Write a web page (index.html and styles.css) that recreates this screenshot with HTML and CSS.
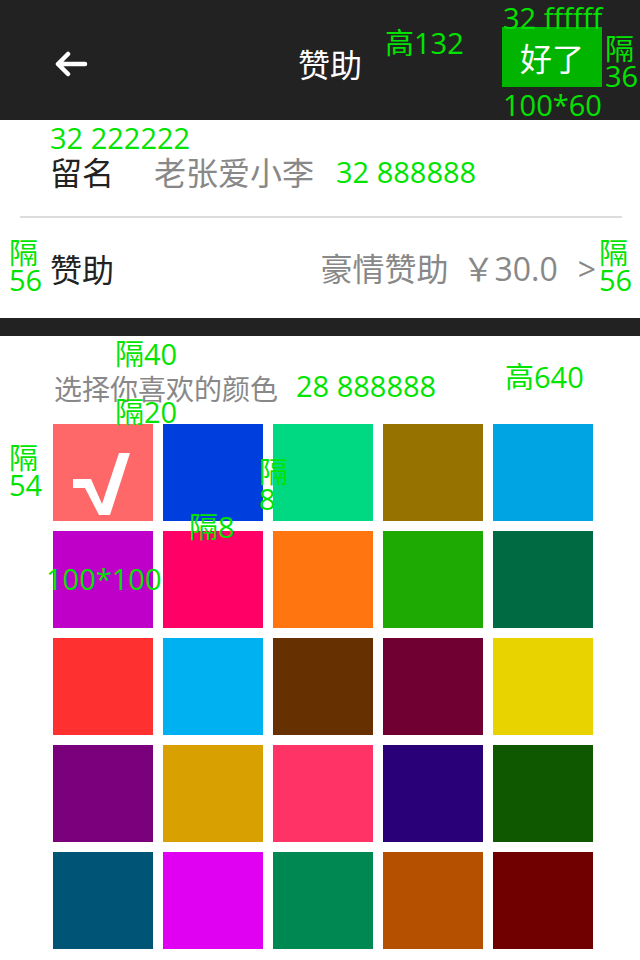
FILE: index.html
```html
<!DOCTYPE html>
<html lang="zh">
<head>
<meta charset="utf-8">
<title>赞助</title>
<link rel="stylesheet" href="styles.css">
</head>
<body>
<div class="page">
  <header class="topbar">
    <svg class="back" width="34" height="26" viewBox="0 0 34 26">
      <path d="M14 3 L4 13 L14 23 M4 13 H31" fill="none" stroke="#fff" stroke-width="4.5" stroke-linecap="round" stroke-linejoin="round"/>
    </svg>
    <div class="title">赞助</div>
    <button class="done">好了</button>
  </header>

  <div class="row row-name">
    <span class="label">留名</span>
    <span class="value">老张爱小李</span>
  </div>
  <div class="divider"></div>
  <div class="row row-amount">
    <span class="label">赞助</span>
    <span class="amount"><span>豪情赞助</span><span class="price">￥30.0</span><span class="chev">&gt;</span></span>
  </div>

  <div class="band"></div>

  <section class="colors">
    <div class="colors-title">选择你喜欢的颜色</div>
    <div class="grid">
      <div class="tile selected" style="background:#ff6868">
        <svg width="100" height="97" viewBox="0 0 100 97">
          <polygon points="20,55 38,55 49,80 66,29 77,29 57,91 46,91 32,64 20,64" fill="#fff"/>
        </svg>
      </div>
      <div class="tile" style="background:#003fdd"></div>
      <div class="tile" style="background:#00d882"></div>
      <div class="tile" style="background:#967200"></div>
      <div class="tile" style="background:#00a4e2"></div>

      <div class="tile" style="background:#bf00c8"></div>
      <div class="tile" style="background:#ff0066"></div>
      <div class="tile" style="background:#ff7610"></div>
      <div class="tile" style="background:#1eaa02"></div>
      <div class="tile" style="background:#006a42"></div>

      <div class="tile" style="background:#ff3030"></div>
      <div class="tile" style="background:#00b1f2"></div>
      <div class="tile" style="background:#663000"></div>
      <div class="tile" style="background:#700032"></div>
      <div class="tile" style="background:#e8d200"></div>

      <div class="tile" style="background:#7a007c"></div>
      <div class="tile" style="background:#d8a000"></div>
      <div class="tile" style="background:#ff3366"></div>
      <div class="tile" style="background:#2a0078"></div>
      <div class="tile" style="background:#105800"></div>

      <div class="tile" style="background:#005576"></div>
      <div class="tile" style="background:#e000f2"></div>
      <div class="tile" style="background:#008852"></div>
      <div class="tile" style="background:#b45000"></div>
      <div class="tile" style="background:#700000"></div>
    </div>
  </section>

  <div class="note n1">32 ffffff</div>
  <div class="note n2">高132</div>
  <div class="note n3 stack">隔<br>36</div>
  <div class="note n4">100*60</div>
  <div class="note n5">32 222222</div>
  <div class="note n6">32 888888</div>
  <div class="note n7 stack">隔<br>56</div>
  <div class="note n8 stack">隔<br>56</div>
  <div class="note n9">隔40</div>
  <div class="note n10">28 888888</div>
  <div class="note n11">高640</div>
  <div class="note n12">隔20</div>
  <div class="note n13 stack">隔<br>54</div>
  <div class="note n14 stack">隔<br>8</div>
  <div class="note n15">隔8</div>
  <div class="note n16">100*100</div>
</div>
</body>
</html>
```

FILE: styles.css
```css
* { box-sizing: border-box; }
html, body { margin: 0; padding: 0; background: #fff; }
body { font-family: "Noto Sans CJK SC", "Noto Sans", sans-serif; }
.page { position: relative; width: 640px; height: 960px; overflow: hidden; background: #fff; }

.topbar {
  height: 120px;
  background: #222222;
  display: flex;
  align-items: center;
}
.back { margin-left: 54px; margin-top: 8px; flex: none; }
.title {
  margin-left: 210px;
  color: #fff;
  font-size: 32px;
  line-height: 40px;
  margin-top: 6px;
}
.done {
  margin-left: auto;
  margin-right: 38px;
  align-self: flex-start;
  margin-top: 27px;
  width: 100px;
  height: 60px;
  border: 0;
  padding: 0;
  background: #00b400;
  color: #fff;
  font-family: inherit;
  font-size: 32px;
  line-height: 60px;
}

.row {
  display: flex;
  align-items: center;
  padding: 0 44px 0 50px;
}
.row-name { height: 96px; padding-top: 6px; }
.row-amount { height: 100px; justify-content: space-between; }
.label { color: #222222; font-size: 32px; line-height: 40px; }
.value { color: #888888; font-size: 32px; line-height: 40px; margin-left: 40px; }
.amount {
  display: flex;
  align-items: baseline;
  color: #888888;
  font-size: 32px;
  line-height: 40px;
}
.price { margin-left: 14px; font-family: "Open Sans", "Noto Sans CJK SC", sans-serif; }
.chev { margin-left: 20px; font-family: "Open Sans", sans-serif; }
.divider { height: 2px; margin: 0 18px 0 20px; background: #dcdcdc; }

.band { height: 18px; background: #222222; }

.colors { padding: 32px 0 0 53px; }
.colors-title { color: #888888; font-size: 28px; line-height: 40px; margin-left: 1px; }
.grid {
  margin-top: 16px;
  display: grid;
  grid-template-columns: repeat(5, 100px);
  grid-auto-rows: 97px;
  column-gap: 10px;
  row-gap: 10px;
}
.tile { display: block; }
.tile svg { display: block; }

.note {
  position: absolute;
  color: #00e400;
  font-family: "Open Sans", "Noto Sans CJK SC", sans-serif;
  font-size: 29px;
  line-height: 28px;
  white-space: nowrap;
}
.note.stack { line-height: 27px; }
.n1 { left: 503px; top: 4px; }
.n2 { left: 385px; top: 29px; }
.n3 { left: 605px; top: 35px; }
.n4 { left: 503px; top: 91px; }
.n5 { left: 50px; top: 124px; }
.n6 { left: 336px; top: 158px; }
.n7 { left: 9px; top: 239px; }
.n8 { left: 599px; top: 239px; }
.n9 { left: 115px; top: 340px; }
.n10 { left: 296px; top: 372px; }
.n11 { left: 505px; top: 363px; }
.n12 { left: 115px; top: 398px; }
.n13 { left: 9px; top: 444px; }
.n14 { left: 259px; top: 458px; }
.n15 { left: 189px; top: 513px; }
.n16 { left: 46px; top: 565px; }
```
